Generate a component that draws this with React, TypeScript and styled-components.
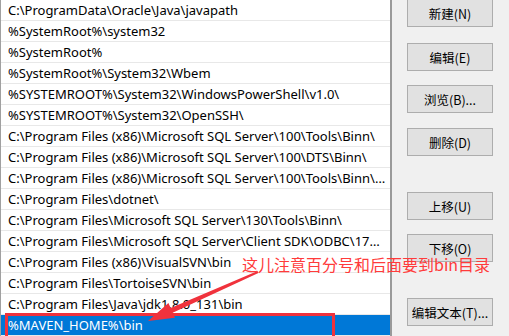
import styled, { createGlobalStyle } from "styled-components"

const GlobalStyle = createGlobalStyle`
  html, body {
    margin: 0;
    padding: 0;
    background: #f0f0f0;
    overflow: hidden;
  }
`

const Window = styled.div`
  position: relative;
  display: flex;
  width: 509px;
  height: 336px;
  overflow: hidden;
  font-family: "Noto Sans", "Noto Sans CJK SC", sans-serif;
  font-size: 13px;
  color: #000;
`

const List = styled.div`
  width: 389px;
  flex-shrink: 0;
  background: #fff;
  border-left: 1px solid #a0a0a0;
  border-right: 2px solid #9a9a9a;
  display: flex;
  flex-direction: column;
`

const Row = styled.div<{ $selected?: boolean }>`
  height: 20px;
  line-height: 21px;
  padding: 0 3px 0 7px;
  border-bottom: 1px solid #e8e8e8;
  white-space: nowrap;
  overflow: hidden;
  text-overflow: ellipsis;
  background: ${(p) => (p.$selected ? "#0078d7" : "#fff")};
  color: ${(p) => (p.$selected ? "#fff" : "#000")};
`

const Panel = styled.div`
  flex: 1;
  background: #f0f0f0;
  display: flex;
  flex-direction: column;
  align-items: flex-start;
  padding-left: 15px;
`

const Btn = styled.div<{ $gap: number }>`
  margin-top: ${(p) => p.$gap}px;
  width: 84px;
  height: 26px;
  flex-shrink: 0;
  background: #e1e1e1;
  border: 1px solid #adadad;
  display: flex;
  align-items: center;
  justify-content: center;
  font-family: "Noto Sans CJK SC", sans-serif;
  font-size: 12.5px;
`

const Note = styled.div`
  position: absolute;
  left: 242px;
  top: 254px;
  color: #ff3b3b;
  font-family: "Noto Sans CJK SC", sans-serif;
  font-size: 16px;
  line-height: 20px;
  white-space: nowrap;
`

const RedBox = styled.div`
  position: absolute;
  left: 5px;
  top: 313px;
  width: 324px;
  height: 30px;
  border: 3px solid #f0323c;
`

const Arrow = styled.svg`
  position: absolute;
  left: 0;
  top: 0;
`

const paths = [
  "C:\\ProgramData\\Oracle\\Java\\javapath",
  "%SystemRoot%\\system32",
  "%SystemRoot%",
  "%SystemRoot%\\System32\\Wbem",
  "%SYSTEMROOT%\\System32\\WindowsPowerShell\\v1.0\\",
  "%SYSTEMROOT%\\System32\\OpenSSH\\",
  "C:\\Program Files (x86)\\Microsoft SQL Server\\100\\Tools\\Binn\\",
  "C:\\Program Files (x86)\\Microsoft SQL Server\\100\\DTS\\Binn\\",
  "C:\\Program Files (x86)\\Microsoft SQL Server\\100\\Tools\\Binn\\VSShell\\Common7\\IDE\\",
  "C:\\Program Files\\dotnet\\",
  "C:\\Program Files\\Microsoft SQL Server\\130\\Tools\\Binn\\",
  "C:\\Program Files\\Microsoft SQL Server\\Client SDK\\ODBC\\170\\Tools\\Binn\\",
  "C:\\Program Files (x86)\\VisualSVN\\bin",
  "C:\\Program Files\\TortoiseSVN\\bin",
  "C:\\Program Files\\Java\\jdk1.8.0_131\\bin",
  "%MAVEN_HOME%\\bin",
]

// top offsets between buttons
const buttons = [
  { label: "新建(N)", gap: -1 },
  { label: "编辑(E)", gap: 16 },
  { label: "浏览(B)...", gap: 14 },
  { label: "删除(D)", gap: 15 },
  { label: "上移(U)", gap: 36 },
  { label: "下移(O)", gap: 14 },
  { label: "编辑文本(T)...", gap: 36 },
]

function App() {
  return (
    <Window>
      <GlobalStyle />
      <List>
        {paths.map((p, i) => (
          <Row key={i} $selected={i === paths.length - 1}>
            {p}
          </Row>
        ))}
      </List>
      <Panel>
        {buttons.map((b) => (
          <Btn key={b.label} $gap={b.gap}>
            {b.label}
          </Btn>
        ))}
      </Panel>

      <RedBox />
      <Arrow width="509" height="336" viewBox="0 0 509 336">
        <polygon
          points="258.4,272.9 257.6,271.1 170.7,308.1 168.4,303.1 148,321 175,317.7 172.7,312.7"
          fill="#f0323c"
        />
      </Arrow>
      <Note>这儿注意百分号和后面要到bin目录</Note>
    </Window>
  )
}

export default App
